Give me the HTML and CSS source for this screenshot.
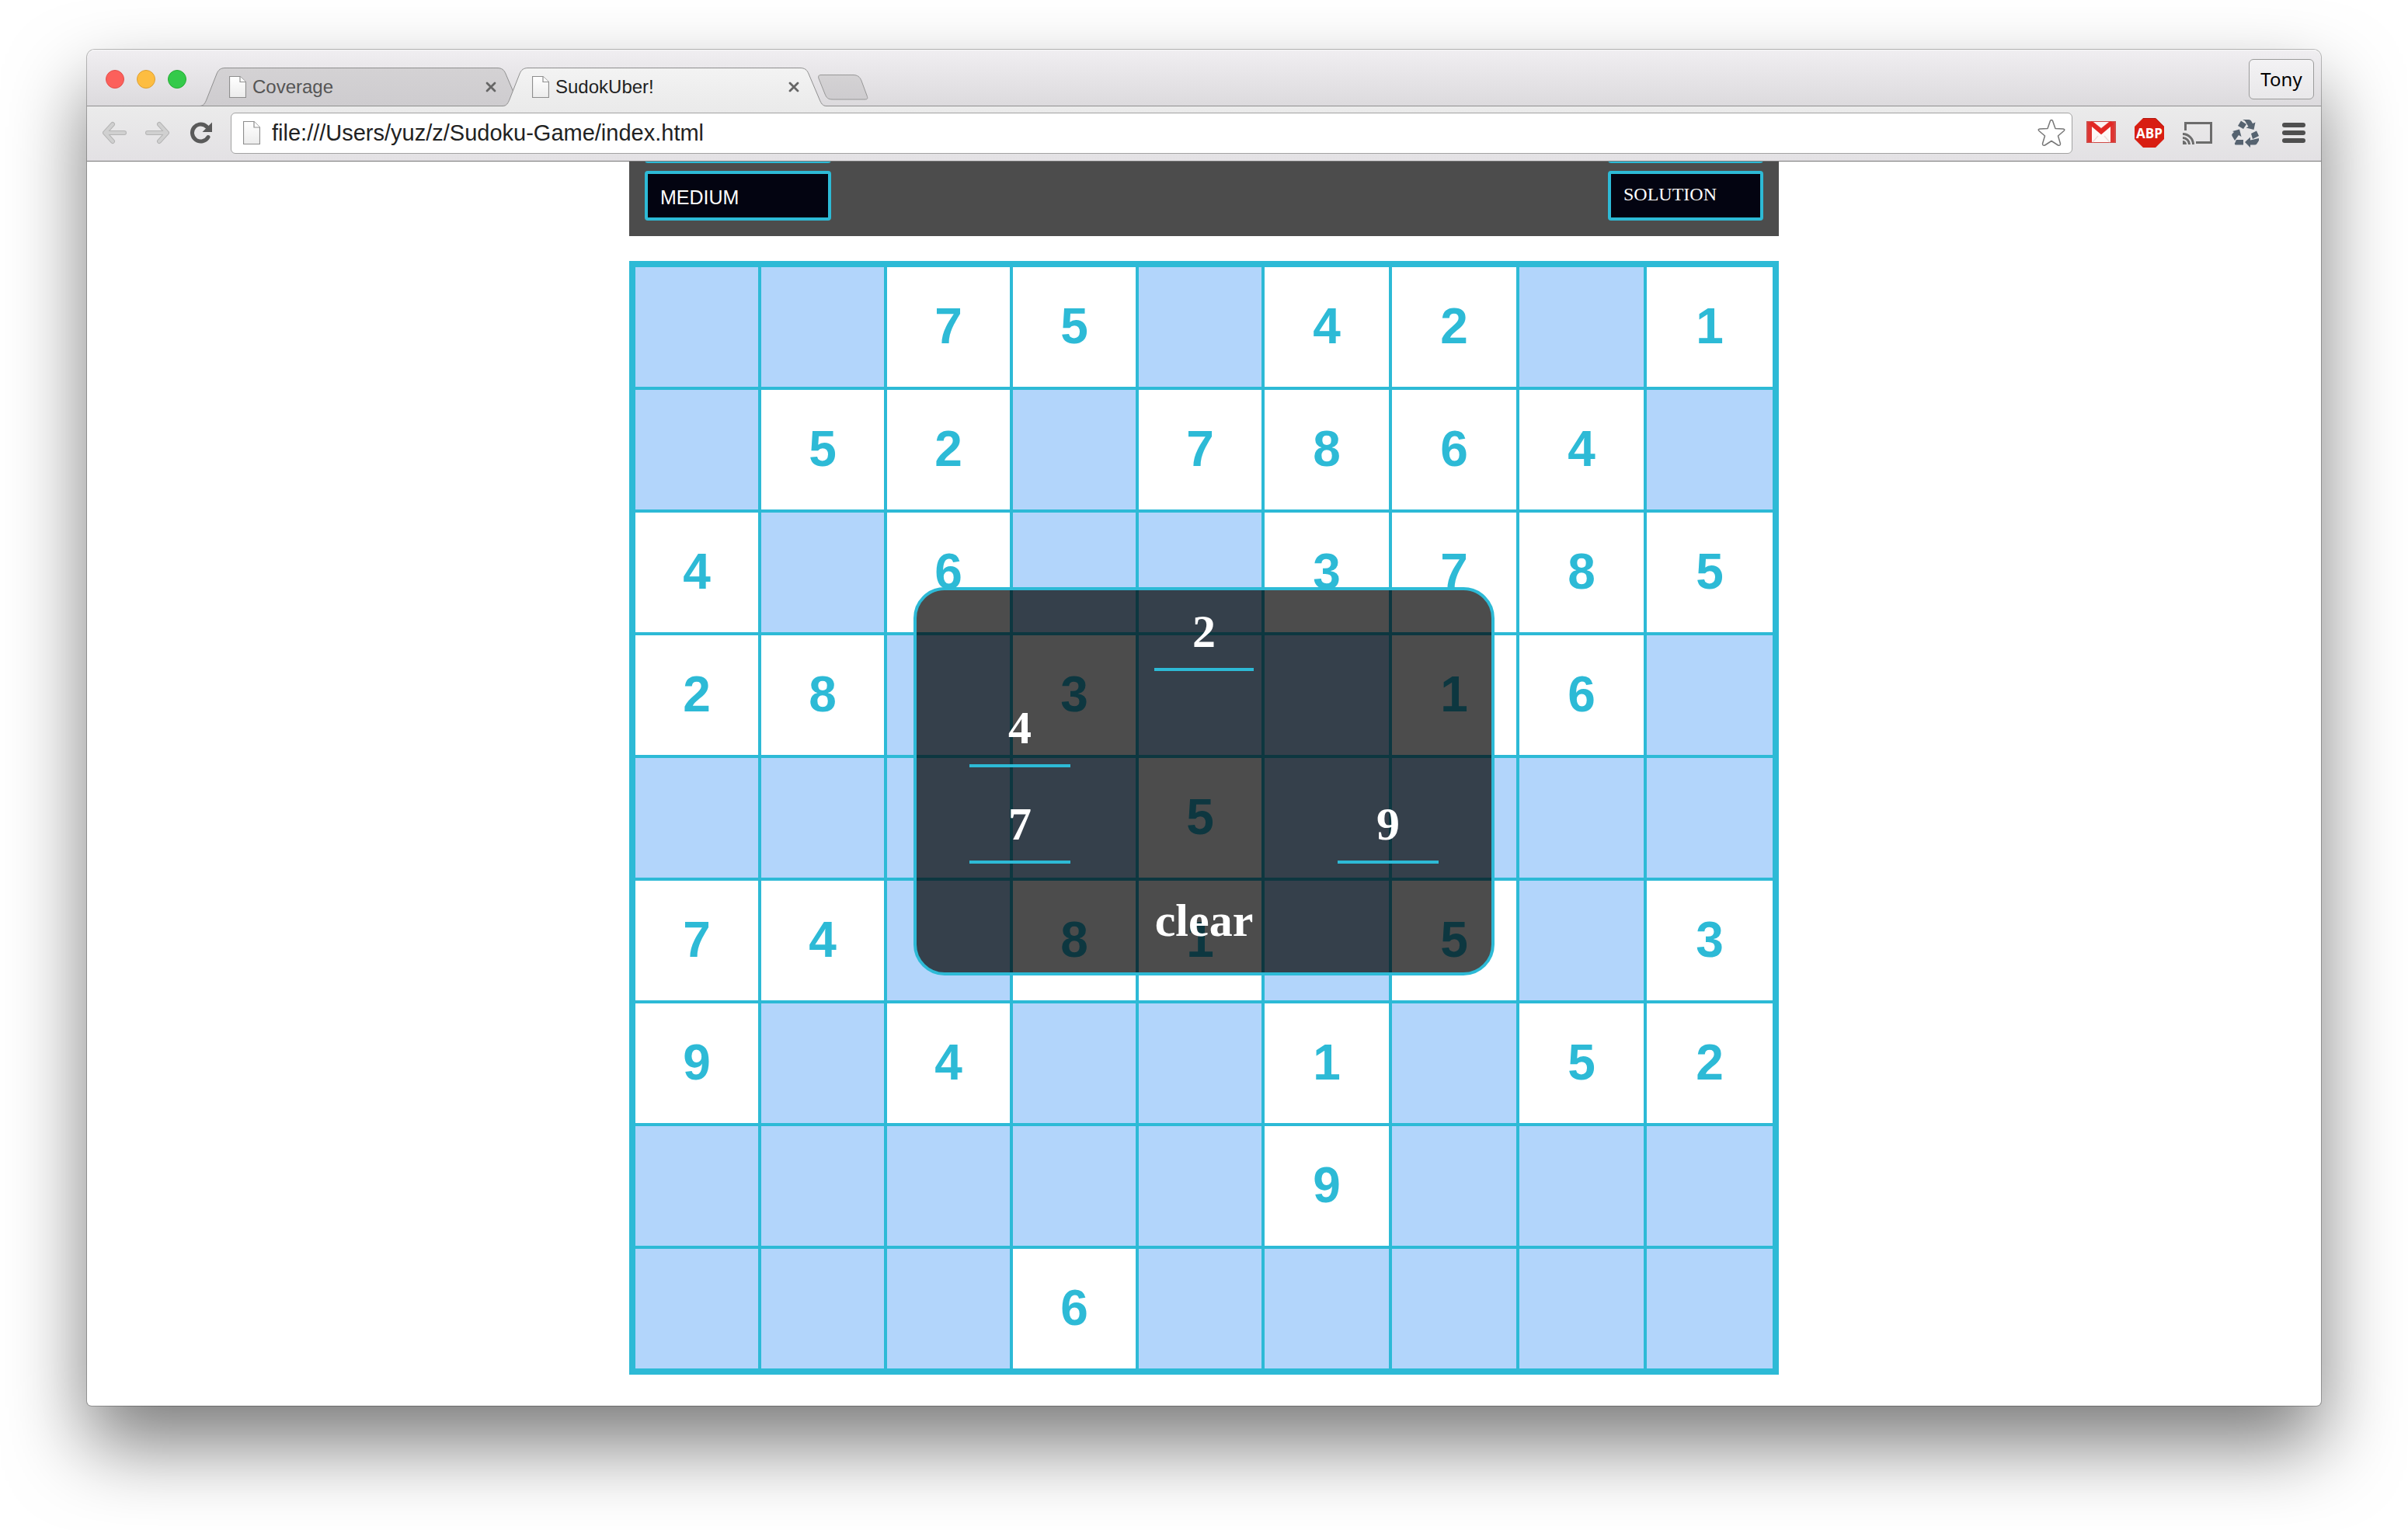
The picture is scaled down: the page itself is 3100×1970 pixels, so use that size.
FILE: index.html
```html
<!DOCTYPE html>
<html lang="en">
<head>
<meta charset="utf-8">
<title>SudokUber!</title>
<link rel="stylesheet" href="styles.css">
</head>
<body>
<svg class="defs" aria-hidden="true">
  <defs>
    <linearGradient id="tab-on" x1="0" y1="0" x2="0" y2="1"><stop offset="0" stop-color="#f3f3f3"/><stop offset="1" stop-color="#ebebeb"/></linearGradient>
    <linearGradient id="tab-off" x1="0" y1="0" x2="0" y2="1"><stop offset="0" stop-color="#d4d2d4"/><stop offset="1" stop-color="#cecccf"/></linearGradient>
    <linearGradient id="sheet" x1="0" y1="0" x2="0" y2="1"><stop offset="0" stop-color="#fff"/><stop offset="1" stop-color="#ececec"/></linearGradient>
    <symbol id="page" viewBox="0 0 22 30" preserveAspectRatio="none"><path d="M.5 .5H14L21.500 8V29.500H.5Z" fill="url(#sheet)" stroke="#8e8e8e" stroke-width="1.2"/><path d="M14 .5V8H21.500" fill="#fff" stroke="#8e8e8e" stroke-width="1.2"/></symbol>
    <symbol id="cross" viewBox="0 0 14 14"><path d="M2 2L12 12M12 2L2 12" stroke="#666" stroke-width="2.8" stroke-linecap="round"/></symbol>
  </defs>
</svg>
<div class="window">
  <header class="titlebar">
    <div class="lights">
      <button class="light red" aria-label="Close window"></button>
      <button class="light amber" aria-label="Minimise window"></button>
      <button class="light green" aria-label="Zoom window"></button>
    </div>
    <nav class="tabs">
      <div class="tab">
        <svg class="tab-shape" viewBox="0 0 417 50"><path d="M0 49.5C5 49.5 7 46 9 41L22 8C24 3 27 .5 33 .5H383C389 .5 392 3 394 8L408 41C410 46 412 49.5 417 49.5Z" fill="url(#tab-off)" stroke="#8f8f8f"/></svg>
        <svg class="tab-icon"><use href="#page"/></svg>
        <a href="#coverage" class="tab-title">Coverage</a>
        <button class="tab-close" aria-label="Close Coverage"><svg width="14" height="14"><use href="#cross"/></svg></button>
      </div>
      <div class="tab active">
        <svg class="tab-shape" viewBox="0 0 417 50"><path d="M0 49.5C5 49.5 7 46 9 41L22 8C24 3 27 .5 33 .5H383C389 .5 392 3 394 8L408 41C410 46 412 49.5 417 49.5V50H0Z" fill="url(#tab-on)"/><path d="M0 49.5C5 49.5 7 46 9 41L22 8C24 3 27 .5 33 .5H383C389 .5 392 3 394 8L408 41C410 46 412 49.5 417 49.5" fill="none" stroke="#8f8f8f"/></svg>
        <svg class="tab-icon"><use href="#page"/></svg>
        <a href="#sudoku" class="tab-title">SudokUber!</a>
        <button class="tab-close" aria-label="Close SudokUber!"><svg width="14" height="14"><use href="#cross"/></svg></button>
      </div>
    </nav>
    <button class="new-tab" aria-label="New tab"><svg width="65" height="33" viewBox="0 0 65 33"><path d="M4 .5H45C51 .5 54 3 56 8L63 27C64.500 31 64 32 60 32H19C13 32 11 30 9 25L1 5C0 2 1 .5 4 .5Z" fill="url(#tab-off)" stroke="#979797"/></svg></button>
    <button class="profile">Tony</button>
  </header>
  <div class="toolbar">
    <button class="tool" aria-label="Back"><svg width="31" height="30" viewBox="0 0 31 30"><path d="M13 4L3 15L13 26M4 15H28" fill="none" stroke="#b5b5b5" stroke-width="6" stroke-linecap="round" stroke-linejoin="round"/><path d="M13 4L3 15L13 26M4 15H28" fill="none" stroke="#d0d0d0" stroke-width="4" stroke-linecap="round" stroke-linejoin="round"/></svg></button>
    <button class="tool" aria-label="Forward"><svg width="31" height="30" viewBox="0 0 31 30"><path d="M18 4L28 15L18 26M27 15H3" fill="none" stroke="#b5b5b5" stroke-width="6" stroke-linecap="round" stroke-linejoin="round"/><path d="M18 4L28 15L18 26M27 15H3" fill="none" stroke="#d0d0d0" stroke-width="4" stroke-linecap="round" stroke-linejoin="round"/></svg></button>
    <button class="tool" aria-label="Reload"><svg width="31" height="30" viewBox="0 0 31 30"><path d="M26 20.500A11 11 0 1 1 24.500 7.500" fill="none" stroke="#5a5a5a" stroke-width="5" stroke-linecap="round"/><path d="M31 1.500V14H18.500Z" fill="#5a5a5a"/></svg></button>
    <div class="omnibox">
      <svg width="22" height="30"><use href="#page"/></svg>
      <input class="address" type="text" aria-label="Address" value="file:///Users/yuz/z/Sudoku-Game/index.html">
      <button class="star" aria-label="Bookmark this page"><svg width="36" height="36" viewBox="0 0 36 36"><path d="M16.500 2.500Q18 .5 19.500 2.500L23 12.500L33 13Q36 13.500 34 15.500L26.500 22L29.500 32Q29.500 35 26.500 34L18 28.500L9.500 34Q6.500 35 6.500 32L9.500 22L2 15.500Q0 13.500 3 13L13 12.500Z" fill="#fff" stroke="#777" stroke-width="1.500" stroke-linejoin="round"/></svg></button>
    </div>
    <div class="extensions">
      <button class="tool" aria-label="Gmail"><svg width="38" height="38" viewBox="0 0 38 38"><rect y="4" width="38" height="28" fill="#cf4a47"/><rect x="2" y="5" width="34" height="26" fill="#df3532"/><path d="M7 31V10L19 20L31 10V31Z" fill="#fdf7f6"/><path d="M9 5H29L19 13Z" fill="#fbf3f3"/><path d="M5 6L19 18L33 6" fill="none" stroke="#e32623" stroke-width="5"/><path d="M8 31L15 23M30 31L23 23" stroke="#ecdcdb" stroke-width="1.500"/></svg></button>
      <button class="tool" aria-label="Adblock Plus"><svg width="38" height="38" viewBox="0 0 38 38"><path d="M11 0H27L38 11V27L27 38H11L0 27V11Z" fill="#d81e12"/><path d="M11 .5H27L37.500 11" fill="none" stroke="#b0150d"/><text x="19" y="26" class="abp">ABP</text></svg></button>
      <button class="tool" aria-label="Cast"><svg width="38" height="38" viewBox="0 0 38 38" fill="none" stroke="#6c6c6c"><path d="M3.500 16V6.500H36.500V31.500H17" stroke-width="3"/><path d="M0 20.500A13.500 13.500 0 0 1 13.500 34M0 25.500A8.500 8.500 0 0 1 8.500 34" stroke-width="3"/><path d="M0 29A5 5 0 0 1 5 34H0Z" fill="#6c6c6c" stroke="none"/></svg></button>
      <button class="tool" aria-label="Recycle"><svg width="38" height="38" viewBox="0 0 38 38" fill="#566370"><path d="M9 10L13 3.500L20 8L16 14Z"/><path d="M15 2H23Q25 2 26 3.500L28 7L31.500 5.500L29.500 15L19.500 12.500L22.500 11L18 3.500Z"/><path d="M2 17L11 14.500L13.500 24L10 22L5 29L1.500 23Q.5 21.500 2 20L4 18Z"/><path d="M7 28H16V34.500H6Q4.500 34.500 5 32.500Z"/><path d="M26 20L33 16.500L36 23L28 27Z"/><path d="M18 31L25 24.500V28.500L36 26V29L33.500 33Q32.500 34.500 30.500 34.500H25V38Z"/></svg></button>
      <button class="tool" aria-label="Menu"><svg width="38" height="38" viewBox="0 0 38 38" fill="#4f4f4f"><rect x="4" y="6" width="30" height="6" rx="3"/><rect x="4" y="16" width="30" height="6" rx="3"/><rect x="4" y="26" width="30" height="6" rx="3"/></svg></button>
    </div>
  </div>
  <main class="viewport">
    <div class="game">
      <div class="controls">
        <div class="control-group wide">
          <span class="control"></span>
          <select class="control" aria-label="Difficulty"><option>MEDIUM</option></select>
        </div>
        <div class="control-group narrow">
          <span class="control"></span>
          <button class="control serif">SOLUTION</button>
        </div>
      </div>
      <table class="board">
        <colgroup><col class="c-s" span="5"><col class="c-m" span="3"><col></colgroup>
        <tbody>
          <tr><td class="e"></td><td class="e"></td><td>7</td><td>5</td><td class="e"></td><td>4</td><td>2</td><td class="e"></td><td>1</td></tr>
          <tr><td class="e"></td><td>5</td><td>2</td><td class="e"></td><td>7</td><td>8</td><td>6</td><td>4</td><td class="e"></td></tr>
          <tr><td>4</td><td class="e"></td><td>6</td><td class="e"></td><td class="e"></td><td>3</td><td>7</td><td>8</td><td>5</td></tr>
          <tr><td>2</td><td>8</td><td class="e"></td><td>3</td><td class="e"></td><td class="e"></td><td>1</td><td>6</td><td class="e"></td></tr>
          <tr><td class="e"></td><td class="e"></td><td class="e"></td><td class="e"></td><td>5</td><td class="e"></td><td class="e"></td><td class="e"></td><td class="e"></td></tr>
          <tr><td>7</td><td>4</td><td class="e"></td><td>8</td><td>1</td><td class="e"></td><td>5</td><td class="e"></td><td>3</td></tr>
          <tr><td>9</td><td class="e"></td><td>4</td><td class="e"></td><td class="e"></td><td>1</td><td class="e"></td><td>5</td><td>2</td></tr>
          <tr><td class="e"></td><td class="e"></td><td class="e"></td><td class="e"></td><td class="e"></td><td>9</td><td class="e"></td><td class="e"></td><td class="e"></td></tr>
          <tr><td class="e"></td><td class="e"></td><td class="e"></td><td>6</td><td class="e"></td><td class="e"></td><td class="e"></td><td class="e"></td><td class="e"></td></tr>
        </tbody>
      </table>
    </div>
    <div class="picker" role="dialog" aria-label="Choose a number">
      <button class="pick mid">2</button>
      <button class="pick left">4</button>
      <button class="pick left">7</button>
      <button class="pick right">9</button>
      <button class="pick mid clear">clear</button>
    </div>
  </main>
</div>
</body>
</html>
```
FILE: styles.css
```css
:root {
  --cyan: #2dbad6;
  --sky: #b2d5fb;
  --sans: "Liberation Sans", Arial, sans-serif;
  --serif: "Liberation Serif", "Times New Roman", serif;
}
* { box-sizing: border-box; }
body {
  margin: 0;
  padding: 64px 112px 160px;
  background: #fff;
  font-family: var(--sans);
}
button {
  margin: 0;
  padding: 0;
  border: 0;
  background: none;
  font: inherit;
  color: inherit;
}
svg { display: block; }
.defs { position: absolute; width: 0; height: 0; }

.window {
  border-radius: 10px 10px 6px 6px;
  background: #fff;
  box-shadow: 0 0 0 1px rgba(0, 0, 0, .25), 0 50px 100px rgba(0, 0, 0, .52);
}

/* Title bar */
.titlebar {
  display: flex;
  align-items: flex-start;
  height: 73px;
  padding-left: 24px;
  border-radius: 10px 10px 0 0;
  background: linear-gradient(#f0eef1, #dcdadd);
  box-shadow: inset 0 -1px #8f8f8f, inset 0 1px #f8f8f8;
}
.lights { display: flex; gap: 16px; margin: 26px 17px 0 0; }
.light { width: 24px; height: 24px; border-radius: 50%; border: 1px solid; }
.red { background: #fc605b; border-color: #e2504c; }
.amber { background: #fdbd41; border-color: #dda035; }
.green { background: #34ca4a; border-color: #27ac35; }
.tabs { display: flex; margin-top: 23px; }
.tab {
  position: relative;
  display: flex;
  align-items: center;
  width: 417px;
  height: 50px;
  padding: 0 35px 0 38px;
  color: #555;
}
.tab.active { margin-left: -27px; color: #222; }
.tab-shape { position: absolute; inset: 0; width: 100%; height: 100%; }
.tab-icon { position: relative; width: 22px; height: 28px; margin-right: 8px; }
.tab-title {
  position: relative;
  flex: 1;
  font-size: 24px;
  line-height: 28px;
  color: inherit;
  text-decoration: none;
}
.tab-close { position: relative; }
.new-tab { margin: 32px 0 0 -11px; }
.profile {
  width: 84px;
  height: 52px;
  margin: 12px 9px 0 auto;
  border: 1px solid #9b9b9b;
  border-radius: 6px;
  background: linear-gradient(#f3f2f4, #e9e8ea);
  font: 24px/32px "Noto Sans", sans-serif;
  color: #000;
}

/* Toolbar */
.toolbar {
  display: flex;
  align-items: center;
  gap: 24px;
  height: 71px;
  padding: 0 16px 2px 20px;
  border-bottom: 1px solid #777;
  background: linear-gradient(#ebebeb, #e3e1e4);
}
.omnibox {
  display: flex;
  flex: 1;
  align-items: center;
  height: 53px;
  padding: 0 8px 0 15px;
  border: 1px solid #a2a2a2;
  border-radius: 6px;
  background: #fff;
}
.address {
  flex: 1;
  min-width: 0;
  height: 40px;
  padding: 0 0 0 15px;
  border: 0;
  background: none;
  font: 29px/32px var(--sans);
  color: #222;
}
.extensions { display: flex; gap: 24px; margin-left: -6px; }
.abp {
  font: bold 17px "Open Sans", sans-serif;
  fill: #fff;
  text-anchor: middle;
}

/* Game */
.viewport { position: relative; padding-bottom: 40px; }
.game { max-width: 1480px; margin: 0 auto; }
.controls {
  display: flex;
  justify-content: space-between;
  height: 96px;
  margin-bottom: 32px;
  padding: 0 20px 20px;
  overflow: hidden;
  background: #4c4c4c;
}
.control-group {
  display: flex;
  flex-direction: column;
  justify-content: flex-end;
  gap: 10px;
}
.wide { width: 240px; }
.narrow { width: 200px; }
.control {
  flex: none;
  width: 100%;
  height: 64px;
  padding: 4px 16px 0;
  border: 4px solid var(--cyan);
  border-radius: 4px;
  appearance: none;
  background: #030411;
  font: 25px/32px var(--sans);
  color: #fff;
  text-align: left;
}
.control.serif { padding: 0 16px 4px; font: 24px/32px var(--serif); }

.board {
  width: 100%;
  table-layout: fixed;
  border: 4px solid var(--cyan);
  border-spacing: 4px;
  background: var(--cyan);
}
.c-s { width: 158px; }
.c-m { width: 160px; }
.board td {
  height: 154px;
  padding: 0 0 2px;
  background: #fff;
  font: bold 64px/72px var(--sans);
  color: var(--cyan);
  text-align: center;
  vertical-align: middle;
}
.board .e { background: var(--sky); }

/* Number picker, floating over the board */
.picker {
  position: absolute;
  top: 548px;
  left: 50%;
  transform: translateX(-50%);
  display: grid;
  grid-template-columns: 130px 128px 130px;
  gap: 20px 108px;
  padding: 0 68px 16px;
  border: 4px solid var(--cyan);
  border-radius: 40px;
  background: rgba(0, 0, 0, .7);
}
.pick {
  height: 104px;
  padding-top: 6px;
  border-bottom: 4px solid var(--cyan);
  font: bold 60px/68px var(--serif);
  color: #fff;
}
.pick.left { grid-column: 1; }
.pick.mid { grid-column: 2; }
.pick.right { grid-column: 3; }
.pick.clear { border-color: transparent; }
```
